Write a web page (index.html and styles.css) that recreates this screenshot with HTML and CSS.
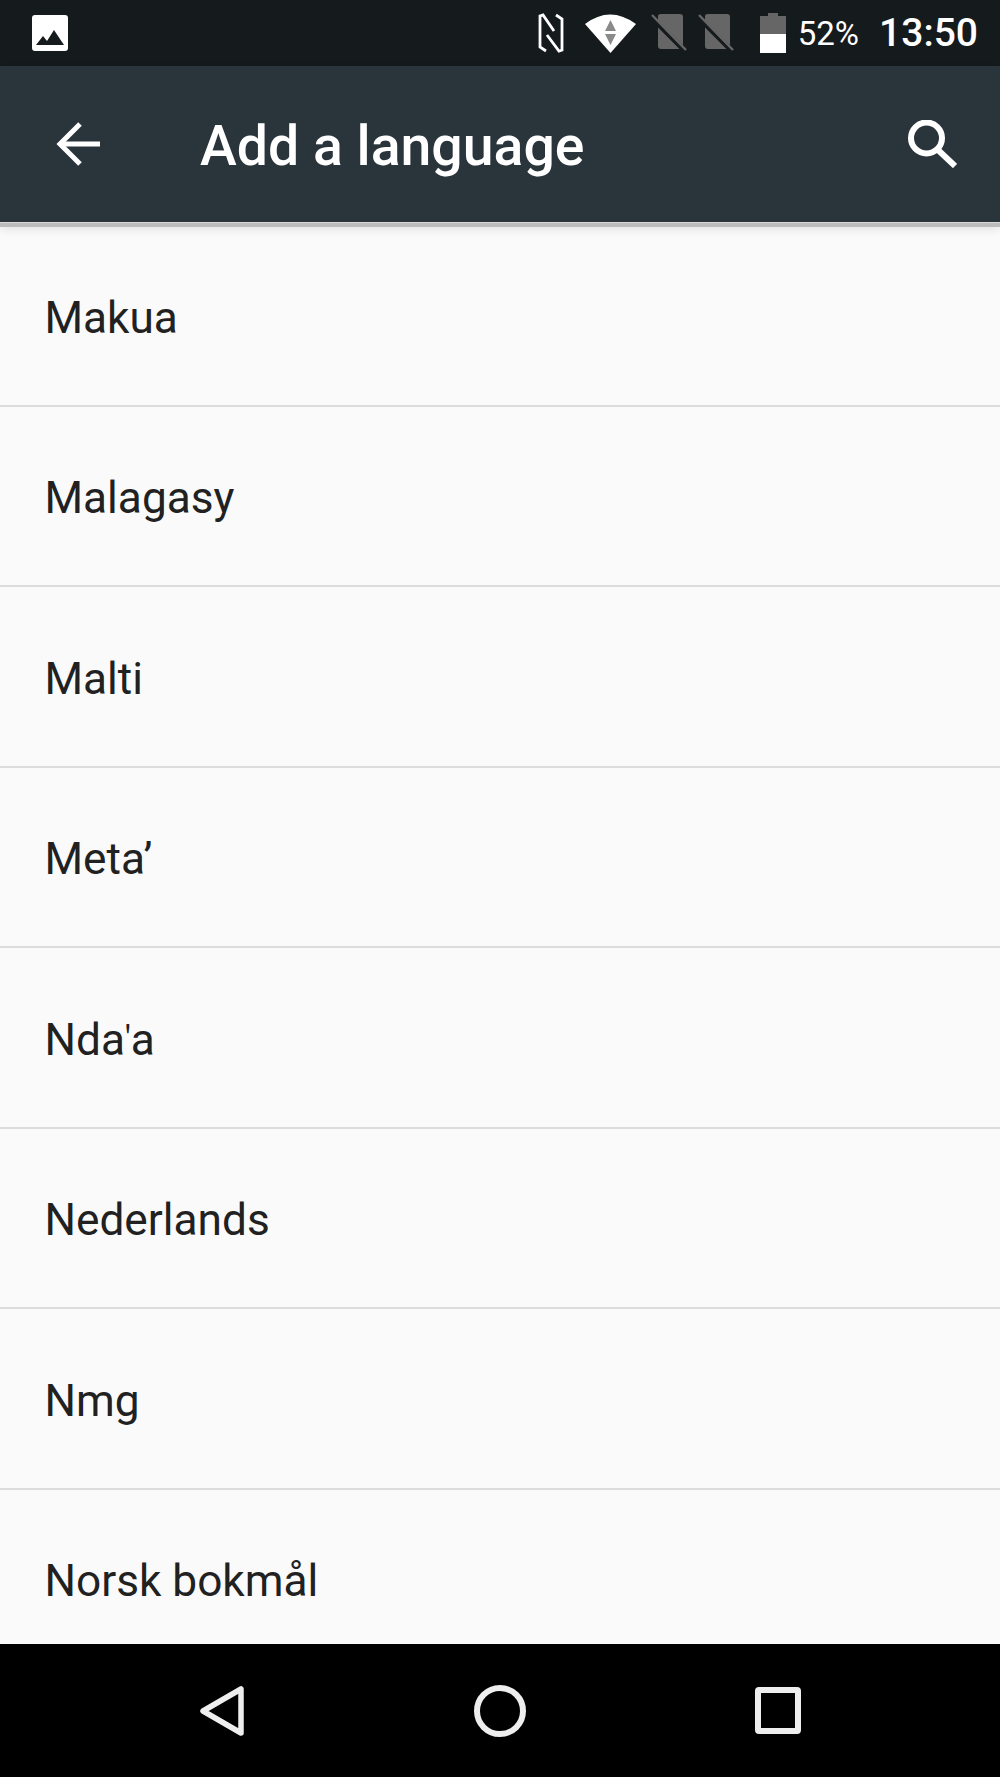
FILE: index.html
```html
<!DOCTYPE html>
<html lang="en">
<head>
    <meta charset="UTF-8">
    <title>Add a language</title>
    <link rel="stylesheet" href="styles.css">
</head>
<body>
    <div class="screen">
        <div class="status-bar">
            <svg class="icon-picture" viewBox="0 0 36 36">
                <rect width="36" height="36" rx="3" fill="#fff"/>
                <path d="M4 30 L11 21 L15 26 L22 15 L32 30 Z" fill="#151a1d"/>
            </svg>
            <div class="status-right">
                <svg class="icon-nfc" viewBox="0 0 26 40" fill="none" stroke="#fff" stroke-width="2.800">
                    <path d="M8 38 L2 34 V3 L5 2 L16 18"/>
                    <path d="M18 2 L24 6 V37 L21 38 L9 22"/>
                </svg>
                <svg class="icon-wifi" viewBox="0 0 51 39">
                    <path d="M0 10 Q25 -9 51 10 L25.5 39 Z" fill="#fff"/>
                    <path d="M25.5 6 L31 17 H20 Z M20 20 H31 L25.5 31 Z" fill="#8a8a8a"/>
                </svg>
                <svg class="icon-sim" viewBox="0 0 36 38">
                    <path d="M7 2 Q7 0 10 0 H29 Q32 0 32 3 V32 Q32 35 29 35 H10 Q7 35 7 32 Z" fill="#666"/>
                    <path d="M1 4 L35 38" stroke="#151a1d" stroke-width="5"/>
                    <path d="M1 1 L35 36" stroke="#666" stroke-width="2.500"/>
                </svg>
                <svg class="icon-sim" viewBox="0 0 36 38">
                    <path d="M7 2 Q7 0 10 0 H29 Q32 0 32 3 V32 Q32 35 29 35 H10 Q7 35 7 32 Z" fill="#666"/>
                    <path d="M1 4 L35 38" stroke="#151a1d" stroke-width="5"/>
                    <path d="M1 1 L35 36" stroke="#666" stroke-width="2.500"/>
                </svg>
                <svg class="icon-battery" viewBox="0 0 26 40">
                    <path d="M8 0 H18 V3 H26 V21 H0 V3 H8 Z" fill="#666"/>
                    <rect y="21" width="26" height="19" fill="#fff"/>
                </svg>
                <span class="battery-text">52%</span>
                <span class="clock">13:50</span>
            </div>
        </div>

        <div class="toolbar">
            <svg class="icon-back" viewBox="0 0 44 44" fill="none" stroke="#fff" stroke-width="5">
                <path d="M44 22 H4"/>
                <path d="M24 2 L4 22 L24 42"/>
            </svg>
            <h1 class="title">Add a language</h1>
            <svg class="icon-search" viewBox="0 0 49 48" fill="none" stroke="#fff" stroke-width="6">
                <circle cx="18.500" cy="18" r="15.500"/>
                <path d="M29 29 L47 46"/>
            </svg>
        </div>

        <div class="language-list">
            <div class="language-row">Makua</div>
            <div class="language-row">Malagasy</div>
            <div class="language-row">Malti</div>
            <div class="language-row">Meta’</div>
            <div class="language-row"><span>Nda<span class="saltillo">ꞌ</span>a</span></div>
            <div class="language-row">Nederlands</div>
            <div class="language-row">Nmg</div>
            <div class="language-row">Norsk bokmål</div>
        </div>

        <div class="nav-bar">
            <svg class="nav-back" viewBox="0 0 46 52" fill="none" stroke="#eee" stroke-width="5.500" stroke-linejoin="round">
                <path d="M42 4 V48 L4 26 Z"/>
            </svg>
            <svg class="nav-home" viewBox="0 0 52 52" fill="none" stroke="#eee" stroke-width="6">
                <circle cx="26" cy="26" r="23"/>
            </svg>
            <svg class="nav-recent" viewBox="0 0 46 47" fill="none" stroke="#eee" stroke-width="6" stroke-linejoin="round">
                <rect x="3" y="3" width="40" height="41" rx="1"/>
            </svg>
        </div>
    </div>
</body>
</html>
```

FILE: styles.css
```css
html, body {
    margin: 0;
    padding: 0;
}

body {
    font-family: Roboto, sans-serif;
    background: #fafafa;
}

.screen {
    width: 1000px;
    height: 1777px;
    display: flex;
    flex-direction: column;
    overflow: hidden;
}

/* status bar */
.status-bar {
    height: 66px;
    flex: none;
    background: #151a1d;
    display: flex;
    align-items: center;
    justify-content: space-between;
    padding: 0 22px 0 32px;
    box-sizing: border-box;
    color: white;
}

.status-right {
    display: flex;
    align-items: center;
}

.icon-picture {
    width: 36px;
    height: 36px;
}

.icon-nfc {
    width: 26px;
    height: 40px;
    margin-right: 21px;
}

.icon-wifi {
    width: 51px;
    height: 39px;
    margin-right: 15px;
}

.icon-sim {
    width: 36px;
    height: 38px;
    margin-right: 11px;
}

.icon-battery {
    width: 26px;
    height: 40px;
    margin-left: 15px;
    margin-right: 12px;
}

.battery-text {
    font-size: 33px;
    margin-right: 20px;
}

.clock {
    font-size: 39px;
    font-weight: 500;
}

/* toolbar */
.toolbar {
    height: 156px;
    flex: none;
    background: #2a343b;
    display: flex;
    align-items: center;
    padding: 0 43px 0 56px;
    box-sizing: border-box;
    box-shadow: 0 1px 0 #d8d8d8, 0 5px 0 #bcbcbc, 0 6px 10px rgba(0, 0, 0, 0.12);
    position: relative;
}

.icon-back {
    width: 44px;
    height: 44px;
    margin-right: 100px;
}

.title {
    flex: 1;
    margin: 0;
    padding-top: 5px;
    font-size: 55.4px;
    font-weight: 500;
    color: white;
}

.icon-search {
    width: 49px;
    height: 48px;
}

/* list */
.language-list {
    flex: 1;
    overflow: hidden;
    padding-top: 4px;
}

.language-row {
    height: 180.5px;
    box-sizing: border-box;
    border-bottom: 2px solid #dcdcdc;
    display: flex;
    align-items: center;
    padding: 5px 0 0 44.5px;
    font-size: 44.2px;
    color: #212121;
}

.saltillo {
    font-size: 30px;
    vertical-align: 9px;
}

/* nav bar */
.nav-bar {
    height: 133px;
    flex: none;
    background: #000;
    display: flex;
    align-items: center;
    justify-content: center;
    gap: 229px;
}

.nav-back {
    width: 46px;
    height: 52px;
}

.nav-home {
    width: 52px;
    height: 52px;
}

.nav-recent {
    width: 46px;
    height: 47px;
}
```
